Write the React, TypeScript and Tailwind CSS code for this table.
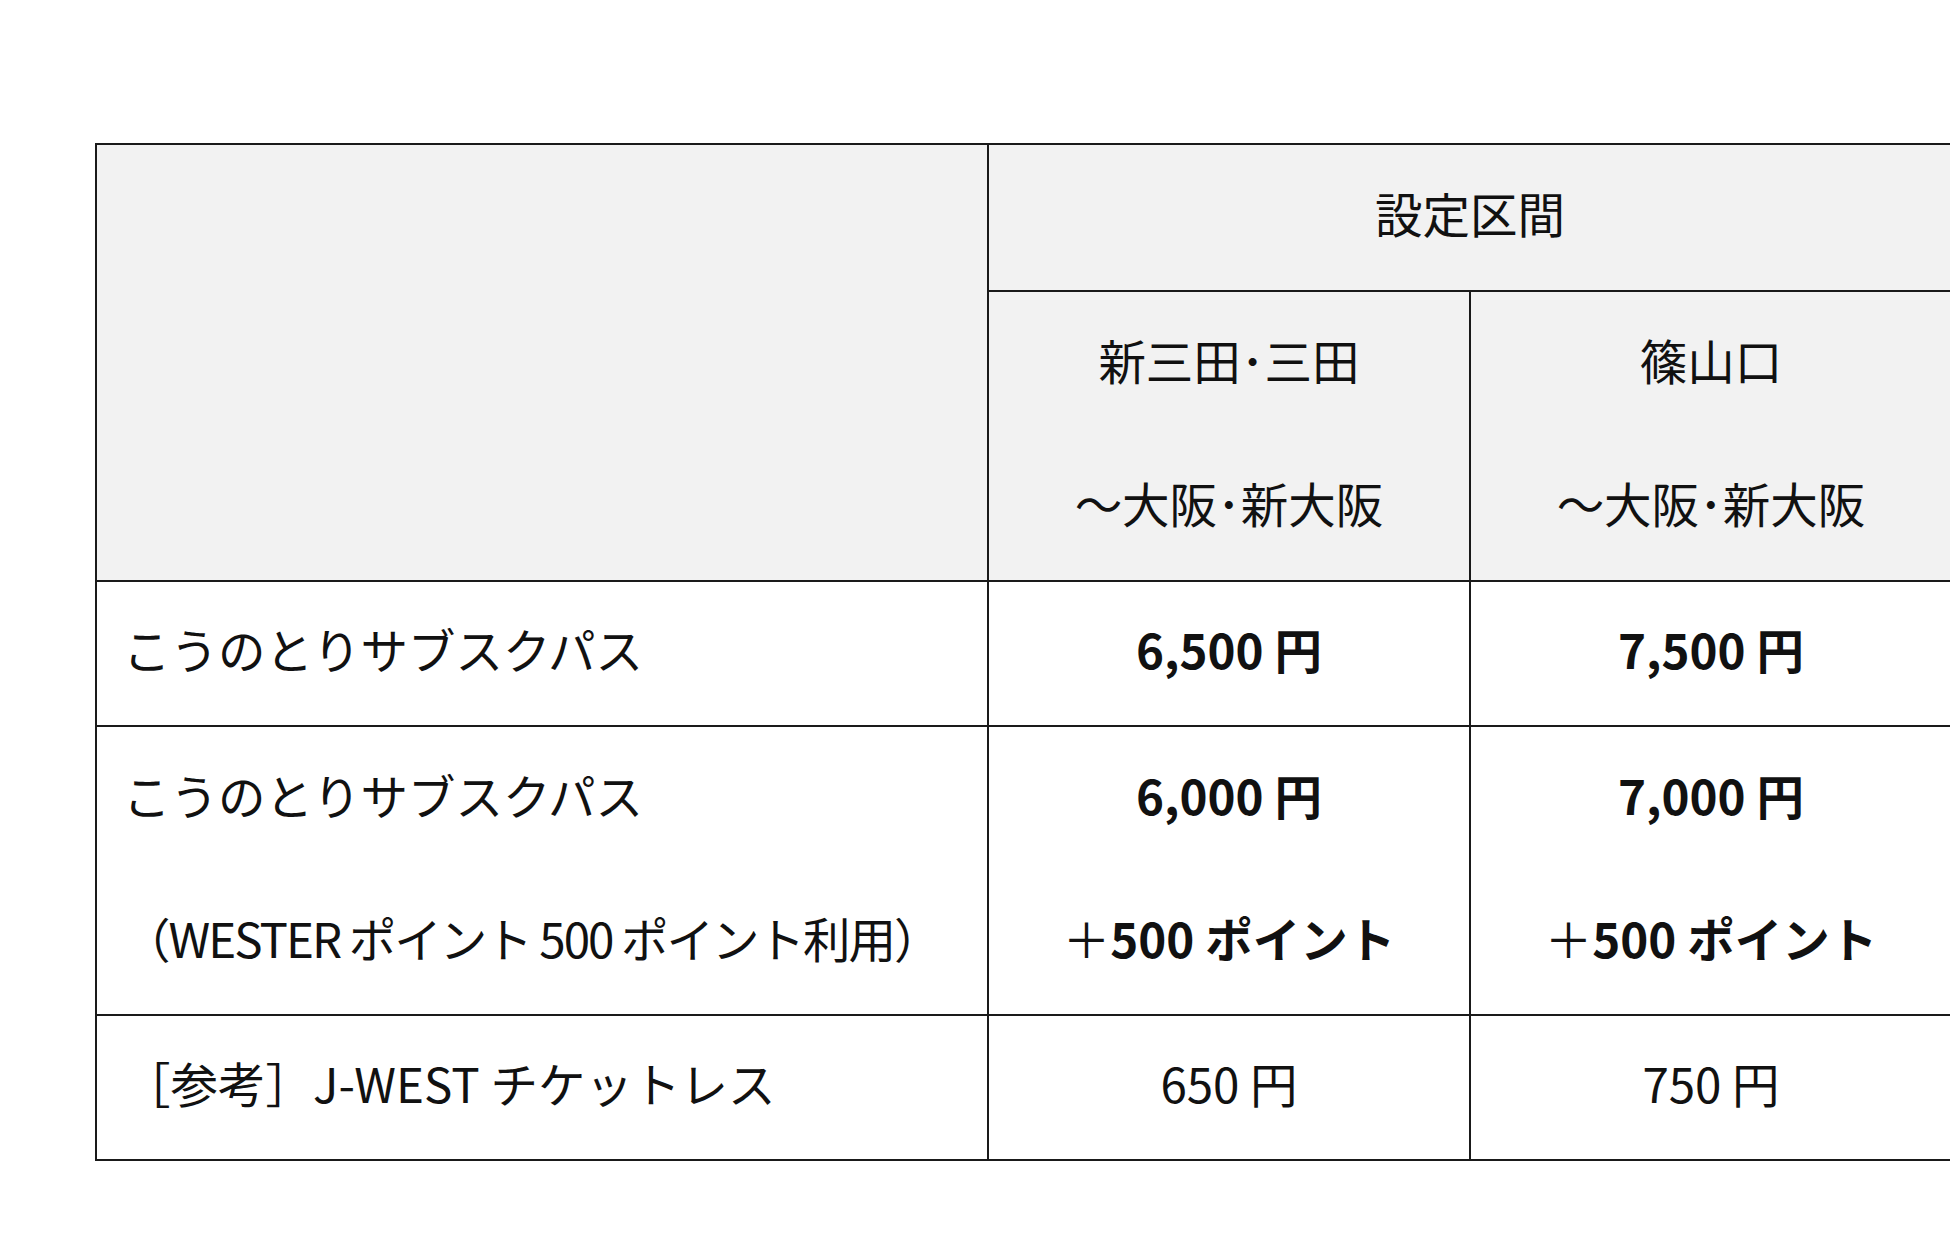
const font = "font-['Noto_Sans_CJK_JP','Noto_Sans',sans-serif]";
const cell = "border-2 border-[#1a1a1a] p-0 align-middle";
const head = `${cell} bg-[#f2f2f2] text-center font-normal`;

const rows = [
  {
    label: ["こうのとりサブスクパス"],
    prices: [["6,500 円"], ["7,500 円"]],
    bold: true,
  },
  {
    label: ["こうのとりサブスクパス", "（WESTER ポイント 500 ポイント利用）"],
    prices: [
      ["6,000 円", "＋500 ポイント"],
      ["7,000 円", "＋500 ポイント"],
    ],
    bold: true,
  },
  {
    label: ["［参考］J-WEST チケットレス"],
    prices: [["650 円"], ["750 円"]],
    bold: false,
  },
];

// negative top margin nudges the text up to sit where the source's glyphs sit
function Lines({ lines }: { lines: string[] }) {
  return (
    <div className="-mt-[10px]">
      {lines.map((l) =>
        l.startsWith("＋") ? (
          <div key={l}>
            <span className="font-normal">＋</span>
            {l.slice(1)}
          </div>
        ) : l.startsWith("（") ? (
          <div key={l} className="tracking-[-2px]">
            {l}
          </div>
        ) : (
          <div key={l}>{l}</div>
        )
      )}
    </div>
  );
}

export default function App() {
  return (
    <div className={`h-[1235px] w-full overflow-hidden bg-white ${font} text-[47.5px] leading-[143px] text-[#111]`}>
      <div className="pl-[95px] pt-[143px]">
        <table className="w-[1856px] table-fixed border-collapse">
          <colgroup>
            <col className="w-[892px]" />
            <col className="w-[482px]" />
            <col className="w-[482px]" />
          </colgroup>
          <thead>
            <tr className="h-[147px]">
              <th rowSpan={2} className={head} />
              <th colSpan={2} className={head}>
                <Lines lines={["設定区間"]} />
              </th>
            </tr>
            <tr className="h-[290px]">
              <th className={head}>
                <Lines lines={["新三田･三田", "～大阪･新大阪"]} />
              </th>
              <th className={head}>
                <Lines lines={["篠山口", "～大阪･新大阪"]} />
              </th>
            </tr>
          </thead>
          <tbody>
            {rows.map((r, i) => (
              <tr key={i} className={r.label.length > 1 ? "h-[289px]" : "h-[145px]"}>
                <td className={`${cell} pl-[26px] text-left`}>
                  <Lines lines={r.label} />
                </td>
                {r.prices.map((p, j) => (
                  <td key={j} className={`${cell} text-center ${r.bold ? "font-bold" : "font-normal"}`}>
                    <Lines lines={p} />
                  </td>
                ))}
              </tr>
            ))}
          </tbody>
        </table>
      </div>
    </div>
  );
}
